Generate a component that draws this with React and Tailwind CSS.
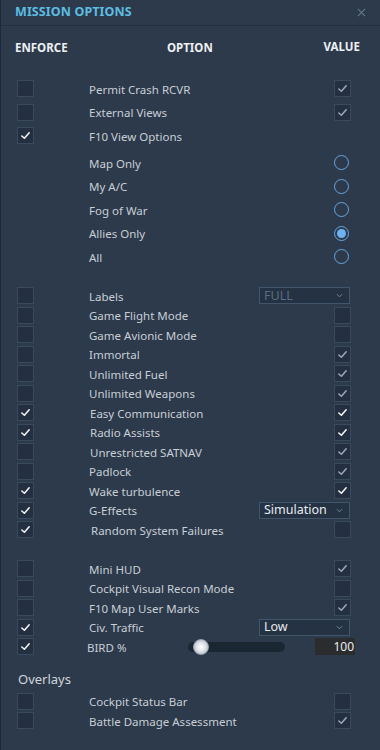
import React from 'react';

const Check = ({ bright }) => (
  <svg viewBox="0 0 12 12" className="w-[11px] h-[11px]">
    <path d="M2 6.5 L4.8 9 L10 3" fill="none" stroke={bright ? '#f2f4f6' : '#9ba6b2'} strokeWidth="1.7" strokeLinecap="round" strokeLinejoin="round" />
  </svg>
);

function Box({ on, bright = true }) {
  return (
    <div className="w-[17px] h-[17px] bg-[#243041] border border-[#3a4a5d] flex items-center justify-center shrink-0">
      {on && <Check bright={bright} />}
    </div>
  );
}

function Radio({ on }) {
  return (
    <div className="w-[15px] h-[15px] rounded-full border-[1.5px] border-[#6aa6dc] flex items-center justify-center mr-[2px]">
      {on && <div className="w-[9px] h-[9px] rounded-full bg-[#6db2f2]" />}
    </div>
  );
}

function Select({ text, disabled }) {
  return (
    <div className="w-[91px] h-[17px] bg-[#243244] border border-[#41556d] flex items-center justify-between pl-[4px] pr-[6px] mr-[1px]">
      <span className={`text-[12.5px] leading-none ${disabled ? 'text-[#5d6c7e]' : 'text-[#e8ebee]'}`}>{text}</span>
      <svg viewBox="0 0 8 5" className="w-[7px] h-[5px]">
        <path d="M1 1 L4 4 L7 1" fill="none" stroke="#8090a2" strokeWidth="1" />
      </svg>
    </div>
  );
}

function Row({ h, enforce, label, value, indent = 0 }) {
  return (
    <div className={`flex items-center pl-4 pr-[29px] ${h}`}>
      <div className="w-[17px] shrink-0">{enforce !== null && <Box on={enforce} />}</div>
      <div className={`flex-1 text-[11.5px] text-[#c9ced4] whitespace-nowrap pt-[1px] ${indent === 1 ? 'pl-[56px]' : indent === 2 ? 'pl-[57px]' : 'pl-[55px]'}`}>{label}</div>
      <div className="flex justify-end">{value}</div>
    </div>
  );
}

const radios = [
  ['Map Only', false],
  ['My A/C', false],
  ['Fog of War', false],
  ['Allies Only', true],
  ['All', false],
];

const section2 = [
  ['Labels', false, <Select text="FULL" disabled />],
  ['Game Flight Mode', false, <Box on={false} />],
  ['Game Avionic Mode', false, <Box on={false} />],
  ['Immortal', false, <Box on bright={false} />],
  ['Unlimited Fuel', false, <Box on bright={false} />],
  ['Unlimited Weapons', false, <Box on bright={false} />],
  ['Easy Communication', true, <Box on />, 1],
  ['Radio Assists', true, <Box on />, 1],
  ['Unrestricted SATNAV', false, <Box on bright={false} />, 1],
  ['Padlock', false, <Box on bright={false} />],
  ['Wake turbulence', true, <Box on />],
  ['G-Effects', true, <Select text="Simulation" />],
  ['Random System Failures', true, <Box on={false} />, 2],
];

export default function App() {
  return (
    <div className="w-[380px] h-[750px] bg-[#2c3a4c] border-l border-[#1e2937] overflow-hidden" style={{ fontFamily: '"Noto Sans", sans-serif' }}>
      <header className="h-[26px] border-b border-[#223041] flex items-center justify-between pl-[14px] pr-[14px]">
        <span className="text-[12.5px] font-bold text-[#5cbde1] tracking-[0.1px]">MISSION OPTIONS</span>
        <svg viewBox="0 0 10 10" className="w-[9px] h-[9px]">
          <path d="M1 1 L9 9 M9 1 L1 9" stroke="#64778e" strokeWidth="1.2" />
        </svg>
      </header>

      <div className="h-[51px] text-[11.5px] font-bold text-[#eef0f2]">
        <div className="flex items-center pl-[14px] pr-[20px] pt-[13px]">
          <span className="w-[152px]">ENFORCE</span>
          <span className="flex-1">OPTION</span>
          <span className="-mt-[3px]">VALUE</span>
        </div>
      </div>

      <Row h="h-[23.5px]" enforce={false} label="Permit Crash RCVR" value={<Box on bright={false} />} />
      <Row h="h-[23.5px]" enforce={false} label="External Views" value={<Box on bright={false} />} />
      <Row h="h-[23.5px]" enforce={true} label="F10 View Options" value={null} />
      <div className="mt-[3.5px]">
        {radios.map(([l, on]) => (
          <Row key={l} h="h-[23.5px]" enforce={null} label={l} value={<Radio on={on} />} />
        ))}
      </div>

      <div className="mt-[17.5px]">
        {section2.map(([l, e, v, ind]) => (
          <Row key={l} h="h-[19.5px]" enforce={e} label={l} value={v} indent={ind} />
        ))}
      </div>

      <div className="mt-[19.5px]">
        <Row h="h-[19.5px]" enforce={false} label="Mini HUD" value={<Box on bright={false} />} />
        <Row h="h-[19.5px]" enforce={false} label="Cockpit Visual Recon Mode" value={<Box on={false} />} />
        <Row h="h-[19.5px]" enforce={false} label="F10 Map User Marks" value={<Box on bright={false} />} />
        <Row h="h-[19.5px]" enforce={true} label="Civ. Traffic" value={<Select text="Low" />} />
        <div className="flex items-center pl-4 pr-[25px] h-[19.5px]">
          <Box on />
          <span className="w-[154px] shrink-0 pl-[53px] pt-[1px] text-[11.5px] text-[#c9ced4]">BIRD %</span>
          <div className="relative w-[97px] h-[10px] rounded-full bg-[#1b2633]">
            <div className="absolute left-[5px] -top-[3px] w-[16px] h-[16px] rounded-full border border-[#9aa4ae] bg-[radial-gradient(circle_at_50%_50%,#ffffff_0%,#dfe3e8_45%,#9aa3ad_100%)]" />
          </div>
          <div className="flex-1" />
          <div className="w-[40px] h-[17px] bg-[#2b2c2e] flex items-center justify-end pr-[1px] text-[12px] text-[#eceef0]">100</div>
        </div>
      </div>

      <div className="h-[20px] mt-[13.5px] pl-[17px] flex items-center text-[13px] text-[#d2d6da]">Overlays</div>
      <div className="mt-[1.5px]">
        <Row h="h-[19.5px]" enforce={false} label="Cockpit Status Bar" value={<Box on={false} />} />
        <Row h="h-[19.5px]" enforce={false} label="Battle Damage Assessment" value={<Box on bright={false} />} />
      </div>
    </div>
  );
}
